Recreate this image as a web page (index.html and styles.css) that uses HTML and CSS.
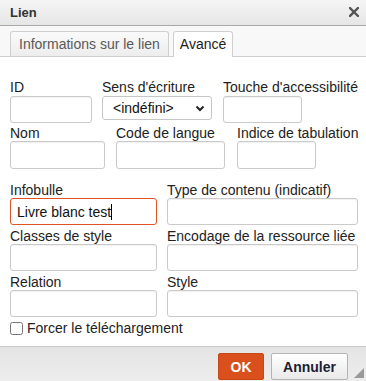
FILE: index.html
```html
<!DOCTYPE html>
<html lang="fr">
<head>
    <meta charset="UTF-8">
    <meta name="viewport" content="width=device-width, initial-scale=1.0">
    <title>Lien</title>
    <link rel="stylesheet" href="styles.css">
</head>
<body>

    <div class="dialog">
        <div class="dialog-title">
            <span>Lien</span>
            <svg class="close" width="10" height="10" viewBox="0 0 10 10">
                <path d="M1 1 L9 9 M9 1 L1 9" stroke="#555" stroke-width="2.4" stroke-linecap="square"/>
            </svg>
        </div>

        <div class="tabs">
            <span class="tab">Informations sur le lien</span>
            <span class="tab active">Avancé</span>
        </div>

        <div class="dialog-body">
            <div class="group">
                <div class="row">
                    <div class="field w-id">
                        <label>ID</label>
                        <input type="text">
                    </div>
                    <div class="field w-dir">
                        <label>Sens d'écriture</label>
                        <div class="select-wrap">
                            <select>
                                <option>&lt;indéfini&gt;</option>
                            </select>
                            <svg class="chevron" width="10" height="7" viewBox="0 0 10 7">
                                <path d="M1.5 1.5 L5 5 L8.5 1.5" fill="none" stroke="#222" stroke-width="2"/>
                            </svg>
                        </div>
                    </div>
                    <div class="field w-key">
                        <label>Touche d'accessibilité</label>
                        <input type="text">
                    </div>
                </div>
                <div class="row row-2">
                    <div class="field w-name">
                        <label>Nom</label>
                        <input type="text">
                    </div>
                    <div class="field w-lang">
                        <label>Code de langue</label>
                        <input type="text">
                    </div>
                    <div class="field w-tab">
                        <label>Indice de tabulation</label>
                        <input type="text">
                    </div>
                </div>
            </div>

            <div class="group group-wide">
                <div class="row">
                    <div class="field w-left">
                        <label>Infobulle</label>
                        <div class="focus-wrap">
                            <input type="text" class="focused" value="Livre blanc test">
                            <span class="caret"></span>
                        </div>
                    </div>
                    <div class="field w-right">
                        <label>Type de contenu (indicatif)</label>
                        <input type="text">
                    </div>
                </div>
                <div class="row">
                    <div class="field w-left">
                        <label>Classes de style</label>
                        <input type="text">
                    </div>
                    <div class="field w-right">
                        <label>Encodage de la ressource liée</label>
                        <input type="text">
                    </div>
                </div>
                <div class="row">
                    <div class="field w-left">
                        <label>Relation</label>
                        <input type="text">
                    </div>
                    <div class="field w-right">
                        <label>Style</label>
                        <input type="text">
                    </div>
                </div>
            </div>

            <label class="check">
                <input type="checkbox">
                <span>Forcer le téléchargement</span>
            </label>
        </div>

        <div class="dialog-footer">
            <button class="btn btn-ok">OK</button>
            <button class="btn btn-cancel">Annuler</button>
            <span class="grip"></span>
        </div>
    </div>

</body>
</html>
```

FILE: styles.css
```css
body {
    margin: 0;
    padding: 0;
    font-family: 'Liberation Sans', Arial, sans-serif;
    font-size: 13px;
    color: #222;
    background-color: #fff;
}

.dialog {
    width: 366px;
    height: 381px;
    display: flex;
    flex-direction: column;
    overflow: hidden;
}

/* title bar */
.dialog-title {
    height: 25px;
    display: flex;
    align-items: center;
    justify-content: space-between;
    padding: 0 7px 0 10px;
    font-weight: bold;
    color: #333;
    background: linear-gradient(#f5f5f5, #e6e6e6);
    border-bottom: 1px solid #a9a9a9;
}

.close {
    margin-top: -1px;
}

/* tabs */
.tabs {
    display: flex;
    gap: 4px;
    padding: 5px 10px 0;
    background-color: #f8f8f8;
    border-bottom: 1px solid #cfcfcf;
    height: 25px;
}

.tab {
    height: 24px;
    line-height: 24px;
    padding: 0 8px;
    color: #595959;
    font-size: 14px;
    background: linear-gradient(#fafafa, #ededed);
    border: 1px solid #cfcfcf;
    border-bottom: none;
    border-radius: 3px 3px 0 0;
}

.tab.active {
    color: #222;
    background: #fff;
    height: 25px;
    margin-bottom: -1px;
    padding: 0 6px;
}

/* body */
.dialog-body {
    flex: 1;
    padding: 22px 10px 0;
    background-color: #fff;
}

.group {
    display: flex;
    flex-direction: column;
    gap: 2px;
}

.group-wide {
    margin-top: 13px;
    gap: 3px;
}

.row {
    display: flex;
}

.field {
    display: flex;
    flex-direction: column;
    flex: none;
}

.field label {
    line-height: 16px;
    height: 16px;
    white-space: nowrap;
    font-size: 14px;
}

.field input[type="text"] {
    box-sizing: border-box;
    width: 100%;
    height: 27px;
    margin: 0;
    border: 1px solid #cacaca;
    border-radius: 3px;
    box-shadow: inset 0 1px 1px rgba(0, 0, 0, 0.06);
    padding: 0 6px;
    font-family: inherit;
    font-size: 14px;
    color: #111;
    background: #fff;
    outline: none;
}

.row-2 .field input[type="text"] {
    height: 28px;
}

.w-id { width: 82px; margin-right: 10px; }
.w-dir { width: 110px; margin-right: 11px; }
.w-key { width: 79px; }
.w-name { width: 95px; margin-right: 11px; }
.w-lang { width: 109px; margin-right: 12px; }
.w-tab { width: 79px; }
.w-left { width: 147px; margin-right: 10px; }
.w-right { width: 191px; }

.w-id input, .w-key input {
    margin-top: 1px !important;
}

/* select */
.select-wrap {
    position: relative;
    margin-top: 1px;
}

.select-wrap select {
    appearance: none;
    -webkit-appearance: none;
    box-sizing: border-box;
    width: 100%;
    height: 24px;
    margin: 0;
    border: 1px solid #c6c6c6;
    border-radius: 3px;
    padding: 0 0 0 10px;
    font-family: inherit;
    font-size: 14px;
    color: #111;
    background: #fff;
}

.chevron {
    position: absolute;
    right: 7px;
    top: 9px;
}

/* focused field */
.focus-wrap {
    position: relative;
}

.field input.focused {
    border-color: #e05424;
    box-shadow: none;
}

.caret {
    position: absolute;
    left: 101px;
    top: 6px;
    width: 1px;
    height: 16px;
    background-color: #000;
}

/* checkbox */
.check {
    display: flex;
    align-items: center;
    gap: 4px;
    margin-top: 3px;
    font-size: 14px;
    line-height: 16px;
}

.check input {
    margin: 0;
    width: 13px;
    height: 13px;
}

/* footer */
.dialog-footer {
    position: relative;
    height: 35px;
    box-sizing: border-box;
    display: flex;
    justify-content: flex-end;
    align-items: flex-start;
    gap: 7px;
    padding: 6px 18px 0 0;
    border-top: 1px solid #c9c9c9;
    background: linear-gradient(#e4e4e4, #ededed);
}

.btn {
    height: 27px;
    margin: 0;
    font-family: inherit;
    font-size: 14px;
    font-weight: bold;
    border-radius: 2px;
    cursor: pointer;
}

.btn-ok {
    width: 46px;
    color: #fff;
    background-color: #d9501d;
    border: 1px solid #c94717;
}

.btn-cancel {
    width: 77px;
    color: #1d1d33;
    background: linear-gradient(#ffffff, #e9e9e9);
    border: 1px solid #b4b4b4;
}

.grip {
    position: absolute;
    right: 2px;
    bottom: 3px;
    width: 0;
    height: 0;
    border-left: 10px solid transparent;
    border-bottom: 10px solid #9a9a9a;
}
```
